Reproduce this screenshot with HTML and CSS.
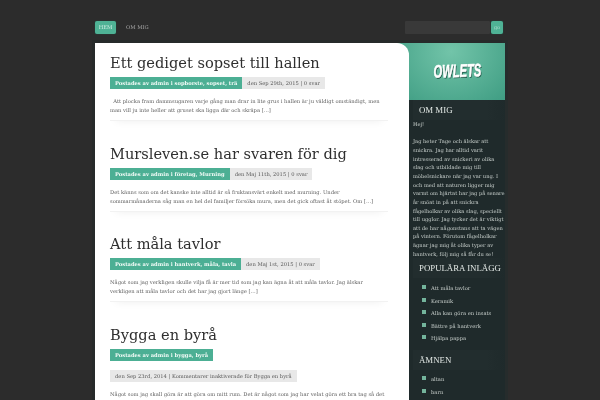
FILE: index.html
```html
<!DOCTYPE html>
<html lang="sv">
<head>
<meta charset="utf-8">
<title>Owlets</title>
<link rel="stylesheet" href="styles.css">
</head>
<body>
<div class="page">
  <header class="top">
    <nav class="nav">
      <a class="nav-item active">HEM</a>
      <a class="nav-item">OM MIG</a>
    </nav>
    <form class="search">
      <span class="search-input"></span>
      <span class="search-btn">go</span>
    </form>
  </header>
  <div class="wrap">
    <main class="main">
      <article class="post">
        <h2 class="title">Ett gediget sopset till hallen</h2>
        <div class="meta"><span class="by">Postades av admin i sopborste, sopset, trä</span><span class="date">den Sep 29th, 2015 | 0 svar</span></div>
        <p class="text">&nbsp;&nbsp;Att plocka fram dammsugaren varje gång man drar in lite grus i hallen är ju väldigt omständigt, men man vill ju inte heller att gruset ska ligga där och skräpa […]</p>
      </article>
      <article class="post">
        <h2 class="title">Mursleven.se har svaren för dig</h2>
        <div class="meta"><span class="by">Postades av admin i företag, Murning</span><span class="date">den Maj 11th, 2015 | 0 svar</span></div>
        <p class="text">Det känns som om det kanske inte alltid är så fruktansvärt enkelt med murning. Under sommarmånaderna såg man en hel del familjer försöka mura, men det gick oftast åt stöpet. Om […]</p>
      </article>
      <article class="post">
        <h2 class="title">Att måla tavlor</h2>
        <div class="meta"><span class="by">Postades av admin i hantverk, måla, tavla</span><span class="date">den Maj 1st, 2015 | 0 svar</span></div>
        <p class="text">Något som jag verkligen skulle vilja få är mer tid som jag kan ägna åt att måla tavlor. Jag älskar verkligen att måla tavlor och det har jag gjort länge […]</p>
      </article>
      <article class="post">
        <h2 class="title">Bygga en byrå</h2>
        <div class="meta stacked"><span class="by">Postades av admin i bygga, byrå</span><span class="date">den Sep 23rd, 2014 | Kommentarer inaktiverade för Bygga en byrå</span></div>
        <p class="text">Något som jag skall göra är att göra om mitt rum. Det är något som jag har velat göra ett bra tag så det blev dags nu att börja planera […]</p>
      </article>
    </main>
    <aside class="side">
      <div class="logo"><span class="logo-text">OWLETS</span></div>
      <section class="widget">
        <h3 class="widget-title">OM MIG</h3>
        <p class="about">Hej!</p>
        <p class="about">Jag heter Tage och älskar att snickra. Jag har alltid varit intresserad av snickeri av olika slag och utbildade mig till möbelsnickare när jag var ung. I och med att naturen ligger mig varmt om hjärtat har jag på senare år snöat in på att snickra fågelholkar av olika slag, speciellt till ugglor. Jag tycker det är viktigt att de har någonstans att ta vägen på vintern. Förutom fågelholkar ägnar jag mig åt olika typer av hantverk, följ mig så får du se!</p>
      </section>
      <section class="widget">
        <h3 class="widget-title">POPULÄRA INLÄGG</h3>
        <ul class="list">
          <li>Att måla tavlor</li>
          <li>Keramik</li>
          <li>Alla kan göra en insats</li>
          <li>Bättre på hantverk</li>
          <li>Hjälpa pappa</li>
        </ul>
      </section>
      <section class="widget">
        <h3 class="widget-title">ÄMNEN</h3>
        <ul class="list">
          <li>altan</li>
          <li>barn</li>
        </ul>
      </section>
    </aside>
  </div>
</div>
</body>
</html>
```

FILE: styles.css
```css
html, body {
  margin: 0;
  height: 400px;
  overflow: hidden;
  background: #2c2c2c;
}
.page {
  width: 410px;
  margin-left: 95px;
  font-family: "DejaVu Serif", serif;
  will-change: transform;
}
.top {
  display: flex;
  justify-content: space-between;
  align-items: center;
  height: 43px;
  padding-top: 12px;
  box-sizing: border-box;
  padding-right: 2px;
}
.nav {
  display: flex;
  align-items: center;
  gap: 10px;
}
.nav-item {
  font-size: 5.2px;
  color: #a9a9a9;
  line-height: 13px;
}
.nav-item.active {
  width: 21px;
  text-align: center;
  color: #d5f0e6;
  background: #4fb295;
  border-radius: 2px;
  box-shadow: 0 0 1px #1f6d59;
}
.search {
  display: flex;
  align-items: center;
  gap: 1px;
}
.search-input {
  display: block;
  width: 85px;
  height: 13px;
  background: #393939;
  border-radius: 1px;
}
.search-btn {
  display: block;
  width: 12px;
  line-height: 13px;
  text-align: center;
  font-size: 5px;
  color: #a8dccb;
  background: #4fb295;
  border-radius: 2px;
  box-shadow: 0 0 1px #1f6d59;
}
.wrap {
  display: flex;
  align-items: flex-start;
  background: #1f2a2b;
  box-shadow: -3px -3px 0 0 #262a2a, 3px -3px 0 0 #262c2c;
  height: 400px;
}
.main {
  width: 314px;
  flex: none;
  background: #fff;
  border-radius: 0 12px 0 0;
  padding: 9px 21px 0 15px;
  box-sizing: border-box;
  position: relative;
  z-index: 1;
  height: 400px;
}
.post {
  height: 90.6px;
  box-sizing: border-box;
}
.title {
  margin: 0;
  font-weight: 400;
  font-size: 14.6px;
  line-height: 21px;
  color: #2f2f2f;
}
.meta {
  display: flex;
  flex-wrap: wrap;
  margin-top: 4px;
  font-size: 5.2px;
  line-height: 12px;
}
.by {
  padding: 0 5px;
  background: #4caf94;
  color: #f2fbf7;
  font-weight: 700;
}
.date {
  padding: 0 5px;
  background: #e8e8e8;
  color: #555;
}
.meta.stacked {
  flex-direction: column;
  align-items: flex-start;
  gap: 9px;
}
.text {
  margin: 8px 0 0;
  padding-bottom: 5px;
  font-size: 5.2px;
  line-height: 9px;
  color: #5c5c5c;
  border-bottom: 1px solid #f2f2f2;
  box-shadow: 0 6px 8px -6px rgba(0, 0, 0, 0.07);
}
.side {
  flex: 1;
  min-width: 0;
  margin-left: -12px;
  color: #c9d0cd;
}
.logo {
  height: 57px;
  display: flex;
  align-items: center;
  justify-content: center;
  padding-left: 12px;
  background: radial-gradient(ellipse at 50% 15%, #72c4a9, #3f9d83);
}
.logo-text {
  display: inline-block;
  font-family: "Liberation Sans", sans-serif;
  font-weight: 700;
  font-style: italic;
  font-size: 18px;
  color: #fff;
  -webkit-text-stroke: 0.6px #fff;
  text-shadow: 1px 1px 0 #174c3e;
  transform: rotate(-2deg) scaleX(0.62);
}
.widget {
  padding: 0 0 0 16px;
}
.widget-title {
  margin: 0;
  padding-left: 6px;
  font-family: "Liberation Serif", serif;
  font-weight: 400;
  font-size: 8.8px;
  line-height: 20px;
  white-space: nowrap;
  color: #e2e8e5;
  background: linear-gradient(90deg, #222d2e 80%, #1f2a2b);
}
.about {
  margin: 0 -0.5px 8.6px 0;
  font-size: 5.15px;
  line-height: 8.65px;
}
.widget .about:last-child {
  margin-bottom: 0;
}
.list {
  list-style: none;
  margin: 3.75px 0 5px;
  padding: 0;
}
.list li {
  position: relative;
  padding-left: 18px;
  font-size: 5.2px;
  line-height: 12.5px;
}
.list li::before {
  content: "";
  position: absolute;
  left: 9px;
  top: 3px;
  width: 4px;
  height: 4px;
  background: #74b49c;
}
```
